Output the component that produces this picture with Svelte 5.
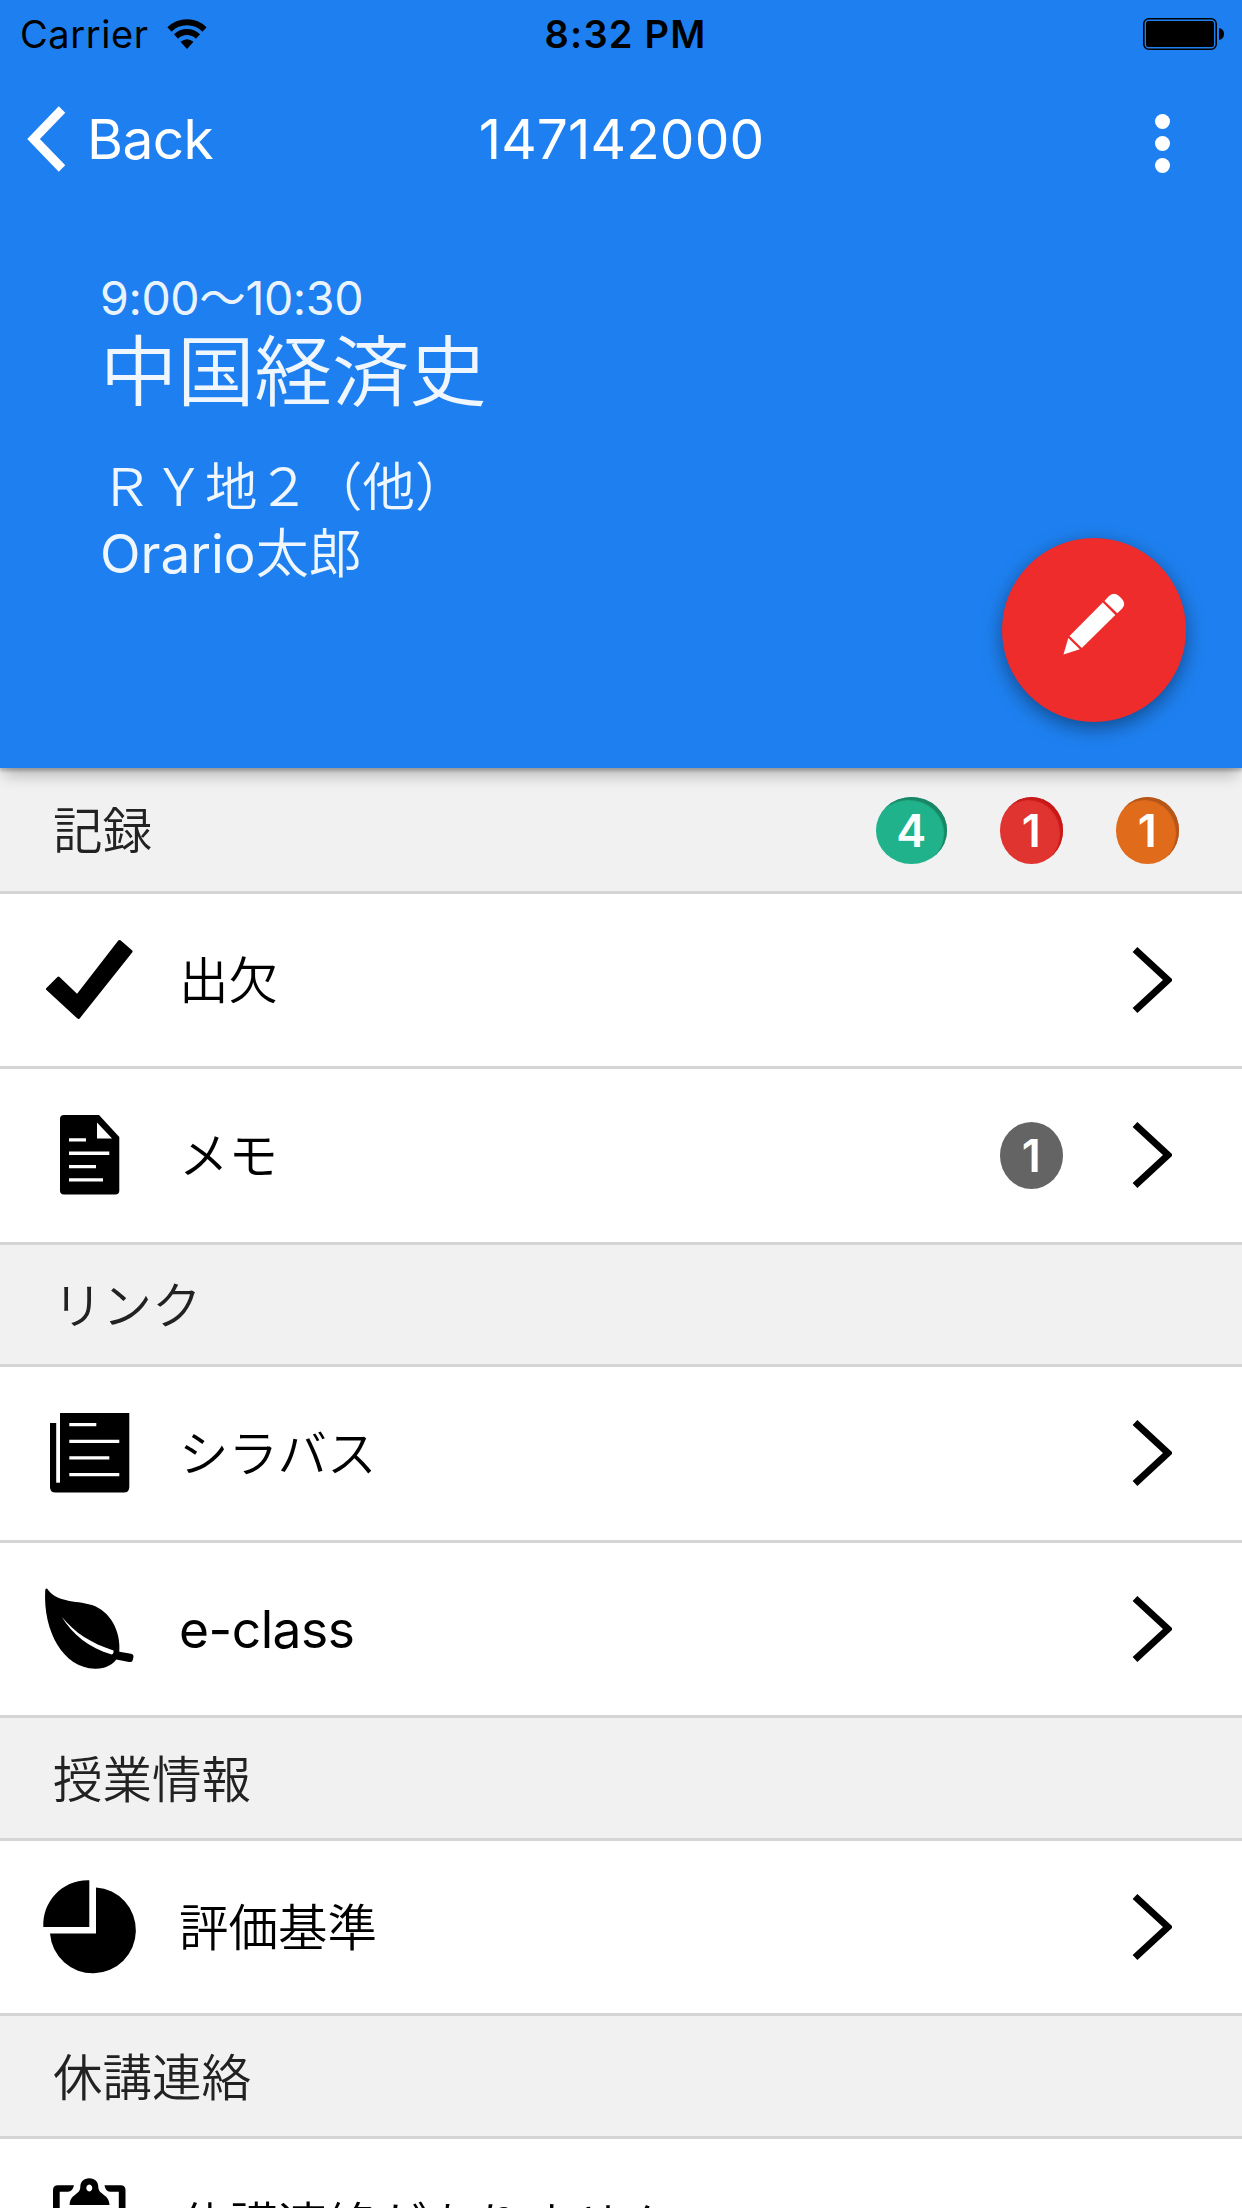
<script lang="ts">
	type Badge = { value: number; color: string };
	type Item = { icon: string; label: string; badge?: number; link: boolean };
	type Section = { title: string; badges: Badge[]; items: Item[] };

	const lecture = {
		code: "147142000",
		time: "9:00〜10:30",
		name: "中国経済史",
		room: "ＲＹ地２（他）",
		teacher: { family: "Orario", given: "太郎" },
	};

	const sections: Section[] = [
		{
			title: "記録",
			badges: [
				{ value: 4, color: "green" },
				{ value: 1, color: "red" },
				{ value: 1, color: "orange" },
			],
			items: [
				{ icon: "check", label: "出欠", link: true },
				{ icon: "memo", label: "メモ", badge: 1, link: true },
			],
		},
		{
			title: "リンク",
			badges: [],
			items: [
				{ icon: "paper", label: "シラバス", link: true },
				{ icon: "leaf", label: "e-class", link: true },
			],
		},
		{
			title: "授業情報",
			badges: [],
			items: [{ icon: "pie", label: "評価基準", link: true }],
		},
		{
			title: "休講連絡",
			badges: [],
			items: [{ icon: "clipboard", label: "休講連絡がありません", link: false }],
		},
	];
</script>

<div class="screen">
	<header class="header">
		<div class="status">
			<div class="carrier">
				<span>Carrier</span>
				<svg class="wifi" viewBox="0 0 40 30">
					<path d="M2.5 10.5 A25 25 0 0 1 37.5 10.5" />
					<path d="M9 17.5 A16 16 0 0 1 31 17.5" />
					<path class="solid" d="M20 30 L13.5 22.8 Q20 17.5 26.5 22.8 Z" />
				</svg>
			</div>
			<div class="clock">8:32 PM</div>
			<div class="power">
				<svg class="battery" viewBox="0 0 82 32">
					<rect x="0.8" y="0.8" width="72.4" height="30.4" rx="5" />
					<rect class="solid" x="3" y="3" width="68" height="26" rx="2.5" />
					<path class="solid" d="M76 10 Q81 11 81 16 Q81 21 76 22 Z" />
				</svg>
			</div>
		</div>

		<nav class="navbar">
			<button class="back">
				<svg viewBox="0 0 40 66"><path d="M35 3.5 L6.5 33 L35 62.5" /></svg>
				<span>Back</span>
			</button>
			<h1>{lecture.code}</h1>
			<button class="more" aria-label="menu">
				<i></i><i></i><i></i>
			</button>
		</nav>

		<div class="lecture">
			<p class="time">{lecture.time}</p>
			<h2>{lecture.name}</h2>
			<p class="room">{lecture.room}</p>
			<p class="teacher">{lecture.teacher.family}<span>{lecture.teacher.given}</span></p>
		</div>

		<button class="fab" aria-label="edit">
			<svg viewBox="0 0 62 62">
				<path d="M45.5 3.5 Q50.5 -1.8 56 3 L59 6 Q63.5 11 59 15.8 L54.3 20.3 L41.5 8 Z" />
				<path d="M39.8 9.5 L52.3 22 L18.8 55 L6.5 43 Z" />
				<path d="M5.3 45 L16.8 56.3 L0.5 61.5 Z" />
			</svg>
		</button>
	</header>

	<main>
		{#each sections as section (section.title)}
			<div class="divider">
				<span class="title">{section.title}</span>
				{#if section.badges.length}
					<div class="badges">
						{#each section.badges as badge}
							<span class="badge {badge.color}">{badge.value}</span>
						{/each}
					</div>
				{/if}
			</div>

			{#each section.items as item (item.label)}
				<div class="item">
					<svg class="icon" viewBox="0 0 108 108">
						{#if item.icon === "check"}
							<path
								d="M22.5 52 L11.5 63 L42.5 91.5 L95 25.5 L83.5 15.5 L41.3 70 Z"
								stroke="#000"
								stroke-width="3"
								stroke-linejoin="round"
							/>
						{:else if item.icon === "memo"}
							<path d="M28 14 H63 L83.3 36 V89.5 Q83.3 93.5 79.3 93.5 H28 Q24 93.5 24 89.5 V18 Q24 14 28 14 Z" />
							<path class="cut" d="M61 21.5 V37.5 H76 Z" />
							<path class="cut" d="M33 37.3 h17 v3.3 h-17 Z M33 50.6 h40.3 v3.3 H33 Z M33 64 h27 v3.3 H33 Z M33 77.2 h34 v3.3 H33 Z" />
						{:else if item.icon === "paper"}
							<path d="M24 14 H93.3 V88 Q93.3 93.5 87.8 93.5 H19.5 Q14 93.5 14 88 V24 H24 Z" />
							<path class="cut" d="M20.2 20 H24 V83.7 H20.2 Z" />
							<path class="cut" d="M33.3 24 h27 v3.3 h-27 Z M33.3 40.7 h50 v3.3 h-50 Z M33.3 57.3 h40 v3.3 h-40 Z M33.3 74 h50 v3.3 h-50 Z" />
						{:else if item.icon === "leaf"}
							<path
								d="M11 13.5 C21 28 38 25 56 30 C74 36 85 56 83.3 76.7 L95 78.8 Q98 79.5 97.4 82.5 L96.6 85.5 Q96 87.5 93 87 L80.3 84.5 C76 90 69 94 59 93.7 C27 93 7 56 9.2 15.5 Q9.5 13 11 13.5 Z"
							/>
							<path class="cut" d="M25.7 41.7 C39 58 55 68 77.5 75.5 Q78 78.5 75.7 79.5 C53 73 36 59 25.7 41.7 Z" />
						{:else if item.icon === "pie"}
							<path d="M53.3 7.3 V54 H7.3 C6 29 26 6.5 53.3 7.3 Z" />
							<path d="M60 14.4 A43 43 0 1 1 14 60.6 H60 Z" />
						{:else if item.icon === "clipboard"}
							<path d="M38 14.2 H22 Q17 14.2 17 19.2 V98 H89.5 V19.2 Q89.5 14.2 84.5 14.2 H68.5 Q69.5 20.5 74 20.8 H82.8 V91 H23.7 V20.8 H32 Q36.5 20.5 38 14.2 Z" />
							<path
								fill-rule="evenodd"
								d="M53.3 7.3 C59 7.3 62.3 11 62.3 16 C62.3 24 73.5 23 73.5 34 H33.7 C33.7 23 44.3 24 44.3 16 C44.3 11 47.6 7.3 53.3 7.3 Z M53.3 13.6 a3 3.5 0 1 0 0.01 0 Z"
							/>
						{/if}
					</svg>
					<span class="label" class:latin={item.label === "e-class"}>{item.label}</span>
					{#if item.badge}
						<span class="badge gray">{item.badge}</span>
					{/if}
					{#if item.link}
						<svg class="chevron" viewBox="0 0 40 68">
							<path d="M3 3.5 L36 34 L3 64.5" />
						</svg>
					{/if}
				</div>
			{/each}
		{/each}
	</main>
</div>

<style>
	:global(body) {
		margin: 0;
		overflow: hidden;
	}

	.screen {
		width: 1242px;
		height: 2208px;
		overflow: hidden;
		background: #fff;
		font-family: Inter, "Noto Sans CJK JP", sans-serif;
		color: #000;
	}

	button {
		padding: 0;
		border: 0;
		background: none;
		font: inherit;
		color: inherit;
	}

	h1,
	h2,
	p {
		margin: 0;
		font-weight: 400;
	}

	.header {
		position: relative;
		z-index: 1;
		height: 768px;
		background: #1e80f0;
		color: #fff;
		box-shadow:
			0 3px 3px rgba(0, 0, 0, 0.22),
			0 12px 14px -4px rgba(0, 0, 0, 0.22);
	}

	/* Status bar */
	.status {
		display: grid;
		grid-template-columns: 1fr auto 1fr;
		align-items: center;
		height: 68px;
		padding: 0 17px 0 20px;
		color: #000;
	}

	.carrier {
		display: flex;
		align-items: center;
		gap: 18px;
		font-size: 38px;
		letter-spacing: 0.6px;
	}

	.wifi {
		width: 40px;
		height: 30px;
		fill: none;
		stroke: #000;
		stroke-width: 6;
	}

	.clock {
		margin-left: 6px;
		font-size: 38px;
		font-weight: 600;
		letter-spacing: 1.2px;
	}

	.power {
		display: flex;
		justify-content: flex-end;
	}

	.battery {
		width: 82px;
		height: 32px;
		fill: none;
		stroke: #000;
		stroke-width: 1.6;
	}

	.solid {
		fill: #000;
		stroke: none;
	}

	/* Navigation bar */
	.navbar {
		display: grid;
		grid-template-columns: 1fr auto 1fr;
		align-items: center;
		height: 142px;
		padding: 0 72px 0 27px;
		font-size: 55px;
	}

	.back {
		display: flex;
		align-items: center;
		gap: 20px;
		letter-spacing: -0.6px;
	}

	.back svg {
		width: 40px;
		height: 66px;
		fill: none;
		stroke: #fff;
		stroke-width: 9;
	}

	.navbar h1 {
		margin-left: 46px;
		font-size: 55px;
		letter-spacing: 0.1px;
	}

	.more {
		display: flex;
		flex-direction: column;
		justify-self: end;
		gap: 7px;
		padding-top: 9px;
	}

	.more i {
		width: 15px;
		height: 15px;
		border-radius: 50%;
		background: #fff;
	}

	.lecture {
		padding: 58px 0 0 100px;
		color: rgba(255, 255, 255, 0.93);
	}

	.time {
		font-size: 46.5px;
		line-height: 60px;
		letter-spacing: -0.4px;
	}

	.lecture h2 {
		font-size: 77.3px;
		font-weight: 350;
		line-height: 88px;
	}

	.room {
		margin-top: 37px;
		font-size: 52.5px;
		font-weight: 350;
		line-height: 68px;
	}

	.teacher {
		font-size: 53px;
		line-height: 66px;
	}

	.teacher span {
		font-weight: 350;
	}

	.fab {
		position: absolute;
		right: 56px;
		bottom: 46px;
		display: flex;
		align-items: center;
		justify-content: center;
		width: 184px;
		height: 184px;
		border-radius: 50%;
		background: #ee2c2c;
		box-shadow: 0 6px 20px rgba(0, 0, 0, 0.42);
	}

	.fab svg {
		width: 62px;
		height: 62px;
		margin-bottom: 12px;
		fill: #fff;
	}

	/* List */
	.divider {
		display: flex;
		align-items: center;
		justify-content: space-between;
		box-sizing: border-box;
		height: 122.5px;
		padding: 0 63px 0 53px;
		border-bottom: 3px solid #d5d5d5;
		background: #f1f1f1;
		color: #222;
		font-size: 49.5px;
		font-weight: 350;
	}

	.divider:first-child {
		height: 125.5px;
	}

	.title {
		padding-bottom: 3px;
	}

	.badges {
		display: flex;
		gap: 52.5px;
		padding-top: 2px;
	}

	.badge {
		box-sizing: border-box;
		width: 63.5px;
		height: 67px;
		border-radius: 50%;
		color: #fff;
		font-size: 45px;
		font-weight: 600;
		line-height: 67px;
		text-align: center;
	}

	.green {
		width: 71.5px;
		background: #20b28a;
		box-shadow: inset -3px 3px 1px #198765;
	}

	.red {
		background: #e03431;
		box-shadow: inset -3px 3px 1px #c71a18;
	}

	.orange {
		background: #df6b1b;
		box-shadow: inset -3px 3px 1px #b5561a;
	}

	.gray {
		margin-right: 69px;
		background: #646464;
	}

	.item {
		display: flex;
		align-items: center;
		box-sizing: border-box;
		height: 175.5px;
		padding: 0 70px 0 36px;
		border-bottom: 3px solid #d5d5d5;
		font-size: 49.5px;
	}

	.icon {
		width: 108px;
		height: 108px;
		margin-right: 35px;
	}

	.cut {
		fill: #fff;
	}

	.label {
		flex: 1;
		padding-bottom: 5px;
		font-weight: 350;
		white-space: nowrap;
	}

	.latin {
		padding: 1px 0 0;
		font-size: 51.5px;
		font-weight: 400;
		letter-spacing: -0.5px;
	}

	.chevron {
		width: 40px;
		height: 68px;
		fill: none;
		stroke: #000;
		stroke-width: 7;
	}
</style>
